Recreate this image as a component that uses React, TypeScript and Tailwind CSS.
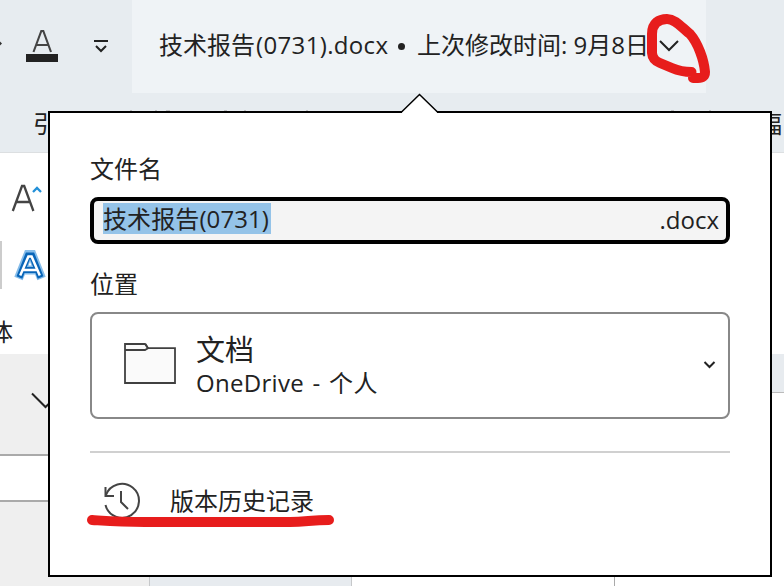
const FONT = "font-['Open_Sans','Noto_Sans_CJK_SC',sans-serif]";

function TitleBar() {
  return (
    <header className="flex h-[93px] shrink-0">
      <div className="flex w-[132px] shrink-0 items-start">
        <svg width="132" height="93" viewBox="0 0 132 93" fill="none">
          <path d="M0 41.5 2 43.5 0 45.5" fill="#333" />
          <path d="M33.5 52 41.3 31h2L51 52M36.3 45h12" stroke="#444" strokeWidth="2.1" />
          <rect x="26" y="54" width="32" height="8" fill="#222" />
          <path d="M94 41h14" stroke="#222" strokeWidth="2" />
          <path d="m96 46 5 5 5-5" stroke="#222" strokeWidth="2" />
        </svg>
      </div>
      <div className="flex h-[93px] w-[574px] shrink-0 items-start bg-[#eff3f6] pl-[27px] pt-[28px] leading-[34px]">
        <span className="w-[97px] shrink-0">技术报告</span>
        <span className="w-[142px] shrink-0 tracking-[0.35px]">(0731).docx</span>
        <span className="flex w-[19px] shrink-0 pt-[15px]">
          <span className="h-[7px] w-[7px] rounded-full bg-[#222]" />
        </span>
        <span className="shrink-0 whitespace-pre">上次修改时间: 9月8日</span>
        <svg className="ml-[10px] mt-[11px] shrink-0" width="20" height="14" viewBox="0 0 20 14" fill="none">
          <path d="m1 2 9 9 9-9" stroke="#222" strokeWidth="2" />
        </svg>
      </div>
    </header>
  );
}

function TabRow() {
  return (
    <nav className="flex h-[60px] shrink-0 border-b border-[#dcdfe1] pl-[33px] pt-[14px] leading-[34px]">
      <span className="w-6 shrink-0">引</span>
      <svg className="ml-[13px] mt-[3px] shrink-0" width="650" height="2" viewBox="70 0 650 2">
        <path d="M130 1h2M155 1h2M166 1h4M224 1h3M244 1h2M306 1h2M671 1h3M709 1h2" stroke="#999" />
      </svg>
      <span className="ml-[38px] w-6 shrink-0">幅</span>
    </nav>
  );
}

function Ribbon() {
  return (
    <section className="flex h-[201px] shrink-0 flex-col bg-white">
      <svg width="48" height="146" viewBox="0 153 48 146" fill="none">
        <path d="m12.800 211 9.200-25h2.200l9.200 25M16 202h13.800" stroke="#444" strokeWidth="2.300" />
        <path d="m33 192 4-4 4 4" stroke="#2390d8" strokeWidth="2.300" />
        <path d="M0 241h2v48H0z" fill="#ccc" />
        <path d="m18.500 278.500 9.500-24h4l9.500 24M23 270h14" stroke="#86bdea" strokeWidth="9" />
        <path d="m19.400 277.500 8.600-22h4l8.600 22M23 270h14" stroke="#0865b8" strokeWidth="6.200" />
        <path d="m20.200 275.500 8.200-19h3.200l8.200 19M23 270h14" stroke="#fff" strokeWidth="2.500" />
      </svg>
      <div className="-ml-[11px] mt-[16px] h-[34px] leading-[34px]">体</div>
    </section>
  );
}

function DocumentArea() {
  return (
    <main className="flex grow">
      <div className="flex w-[149px] shrink-0 flex-col bg-[#efefef]">
        <div className="h-[100px] pl-[31px] pt-[37px]">
          <svg width="30" height="18" viewBox="0 0 30 18" fill="none">
            <path d="m1 2.500 13.500 13.500 14-13.500" stroke="#222" strokeWidth="2" />
          </svg>
        </div>
        <div className="h-[48px] border-y-2 border-[#aaa] bg-white" />
      </div>
      <div className="w-[203px] shrink-0 border-x border-[#c6c8ca] bg-[#e7ebef]" />
      <div className="flex grow flex-col bg-white">
        <div className="h-[39px] border-b border-[#bbb] bg-[#e7ebef]" />
        <div className="w-[263px] grow border-r border-[#aaa]" />
      </div>
    </main>
  );
}

function FolderIcon() {
  return (
    <svg className="ml-[31px] mt-[28px] shrink-0" width="54" height="44" viewBox="0 0 54 44">
      <path d="M2 2h20l3 4.200h27V41H2z" fill="#fafafa" stroke="#404040" strokeWidth="1.800" />
      <path d="M2 8h20l3-1.800L22.500 2" fill="none" stroke="#404040" strokeWidth="1.800" />
    </svg>
  );
}

function HistoryIcon() {
  return (
    <svg className="ml-[14px] shrink-0" width="38" height="38" viewBox="0 0 38 38" fill="none" stroke="#444" strokeWidth="2">
      <path d="M2 13A17 17 0 1 1 1.500 23" />
      <path d="M1.500 5v9H10" />
      <path d="M17 9v11l7 7" />
    </svg>
  );
}

function FilePopup() {
  return (
    <div className="absolute left-[48px] top-[111px] flex h-[466px] w-[724px] flex-col border-2 border-black bg-white px-10">
      <svg className="absolute -top-[20px] left-[351px]" width="38" height="21" viewBox="0 0 38 21">
        <path d="M1 21V19L18.500 2 36 19v2z" fill="#fff" />
        <path d="M0 19.500 18.500 1.500 37 19.500" fill="none" stroke="#000" strokeWidth="1.500" />
      </svg>
      <div className="mt-[39px] h-[34px] leading-[34px]">文件名</div>
      <div className="mt-[11px] flex h-[47px] shrink-0 justify-between rounded-[8px] border-4 border-black bg-[#f4f4f4] pl-[9px] pr-[7px]">
        <span className="mt-[2px] h-[31px] w-[168px] whitespace-nowrap bg-[#94c3e8] leading-[31px] tracking-[0.1px]">技术报告(0731)</span>
        <span className="mt-[2px] leading-[34px]">.docx</span>
      </div>
      <div className="mt-[23px] h-[34px] leading-[34px]">位置</div>
      <div className="mt-[11px] flex h-[107px] shrink-0 rounded-[8px] border-2 border-[#888]">
        <FolderIcon />
        <div className="ml-[19px] mt-[17px] grow">
          <div className="h-[38px] text-[29px] leading-[38px]">文档</div>
          <div className="-mt-[3px] h-[34px] whitespace-nowrap leading-[34px] tracking-[0.3px] [word-spacing:2px]">OneDrive - 个人</div>
        </div>
        <svg className="mr-[12px] mt-[46px]" width="13" height="9" viewBox="0 0 13 9" fill="none">
          <path d="m1.500 2 5 5 5-5" stroke="#222" strokeWidth="2" />
        </svg>
      </div>
      <div className="mt-8 h-[2px] shrink-0 bg-[#d0d0d0]" />
      <div className="mt-[29px] flex h-[38px] items-center">
        <HistoryIcon />
        <span className="ml-[28px]">版本历史记录</span>
      </div>
    </div>
  );
}

function RedMarks() {
  return (
    <svg className="pointer-events-none absolute left-0 top-0" width="784" height="586" viewBox="0 0 784 586" fill="none" stroke="#e71d1c" strokeWidth="10" strokeLinecap="round" strokeLinejoin="round">
      <path d="M92 520C108 521 120 522 145 522H290C306 522 311 520 329 520" />
      <path d="M691.500 72C686 72 679 71 672 68L660 63Q652.500 60 652 53L652 34C652 23 659 19 667 19C676 19 682 28 690 34C698 43 704 60 705 72Q705 78 698 78H693" />
    </svg>
  );
}

export default function App() {
  return (
    <div className={`relative flex h-[586px] w-[784px] flex-col overflow-hidden bg-[#e7ecf0] text-[24px] text-[#222] ${FONT}`}>
      <TitleBar />
      <TabRow />
      <Ribbon />
      <DocumentArea />
      <FilePopup />
      <RedMarks />
    </div>
  );
}
